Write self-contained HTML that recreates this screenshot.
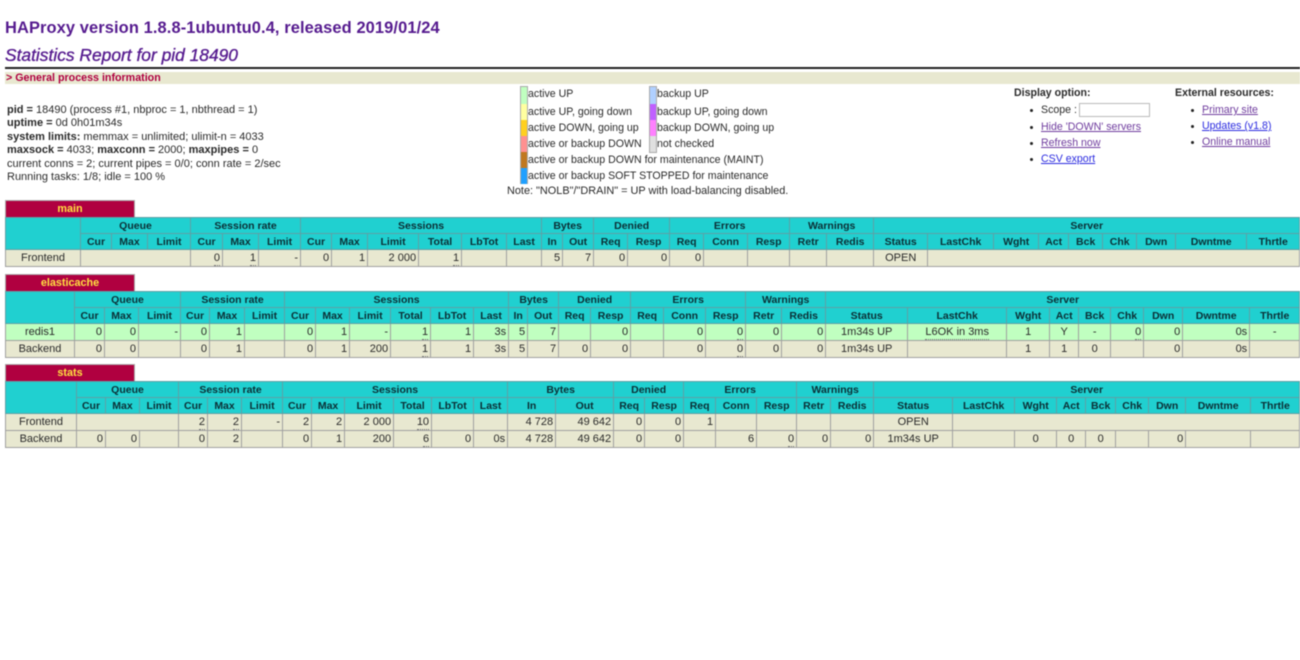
<!DOCTYPE html>
<html><head><meta charset="utf-8"><title>Statistics Report for HAProxy</title>
<style>
html,body{margin:0;padding:0;background:#fff;}
body{width:1300px;height:660px;position:relative;overflow:hidden;font-family:"Liberation Sans",sans-serif;font-size:10.6px;color:#2a2a2a;filter:blur(.4px);}
.a{position:absolute;white-space:nowrap;}
h1,h2,h3{margin:0;position:absolute;white-space:nowrap;}
h1{left:5px;top:18px;font-size:16.45px;line-height:20px;color:#561b8f;letter-spacing:.1px;}
h2{left:5px;top:45px;font-size:17.4px;line-height:20px;color:#561b8f;font-style:italic;font-weight:normal;-webkit-text-stroke:.35px #561b8f;}
.hr{position:absolute;left:5px;top:67px;width:1295px;height:1.5px;background:#222;}
h3{left:5px;top:72px;width:1295px;height:12px;line-height:12px;background:#e8e8d0;color:#b00040;font-size:10.7px;padding-left:1px;box-sizing:border-box;}
.info{left:7px;top:103.5px;line-height:13.5px;font-size:11px;}
.sw{position:absolute;width:6px;box-sizing:content-box;border-left:1px solid #aaa;border-right:1px solid #aaa;}
.n{font-size:10.9px;}
a{color:#6f3c9e;text-decoration:underline;}
a.b{color:#2a2ae0;}
.dot{position:absolute;width:3px;height:3px;border-radius:50%;background:#222;}
.px{position:absolute;left:5px;width:130px;height:17px;line-height:17px;background:#b00040;color:#ffe040;font-weight:bold;text-align:center;font-size:10.8px;box-sizing:border-box;border:1px solid #aaa;border-bottom:0;}
table{position:absolute;left:5px;width:1294px;table-layout:fixed;border-collapse:collapse;font-size:11px;}
td,th{border:1px solid #a0a0a0;padding:0 2px 0 0;overflow:hidden;white-space:nowrap;line-height:14px;text-align:right;background:#e8e8d0;}
th{background:#20d0d0;color:#0b2f35;text-align:center;font-weight:bold;padding:0;border-color:#5fa0a5;font-size:10.5px;}
tr.h0{height:16px;}
tr.h1{height:17px;}
td.c{text-align:center;padding:0;}
tr.g td{background:#c0ffc0;}
u{text-decoration:none;border-bottom:1px dotted #777;display:inline-block;line-height:13px;}
</style></head><body>
<h1>HAProxy version 1.8.8-1ubuntu0.4, released 2019/01/24</h1>
<h2>Statistics Report for pid 18490</h2>
<div class="hr"></div>
<h3>&gt; General process information</h3>

<div class="a info"><b>pid = </b>18490 (process #1, nbproc = 1, nbthread = 1)<br><b>uptime = </b>0d 0h01m34s<br><b>system limits:</b> memmax = unlimited; ulimit-n = 4033<br><b>maxsock = </b>4033; <b>maxconn = </b>2000; <b>maxpipes = </b>0<br>current conns = 2; current pipes = 0/0; conn rate = 2/sec<br>Running tasks: 1/8; idle = 100 %</div>

<div class="sw" style="left:520px;top:86px;height:17px;background:#c0ffc0;border-top:1px solid #aaa"></div>
<div class="sw" style="left:520px;top:104px;height:16px;background:#ffffa0"></div>
<div class="sw" style="left:520px;top:120px;height:16px;background:#ffd020"></div>
<div class="sw" style="left:520px;top:136px;height:16px;background:#ff9090"></div>
<div class="sw" style="left:520px;top:152px;height:16px;background:#c07820"></div>
<div class="sw" style="left:520px;top:168px;height:16px;background:#20a0ff"></div>
<div class="sw" style="left:649px;top:86px;height:17px;background:#b0d0ff;border-top:1px solid #aaa"></div>
<div class="sw" style="left:649px;top:104px;height:16px;background:#c060ff"></div>
<div class="sw" style="left:649px;top:120px;height:16px;background:#ff80ff"></div>
<div class="sw" style="left:649px;top:136px;height:16px;background:#e0e0e0;border-bottom:1px solid #aaa"></div>
<div class="a" style="left:528px;top:88px;">active UP</div>
<div class="a" style="left:528px;top:106px;">active UP, going down</div>
<div class="a" style="left:528px;top:122px;">active DOWN, going up</div>
<div class="a" style="left:528px;top:138px;">active or backup DOWN</div>
<div class="a" style="left:528px;top:154px;">active or backup DOWN for maintenance (MAINT)</div>
<div class="a" style="left:528px;top:170px;">active or backup SOFT STOPPED for maintenance</div>
<div class="a" style="left:657px;top:88px;">backup UP</div>
<div class="a" style="left:657px;top:106px;">backup UP, going down</div>
<div class="a" style="left:657px;top:122px;">backup DOWN, going up</div>
<div class="a" style="left:657px;top:138px;">not checked</div>
<div class="a n" style="left:507px;top:185px;">Note: "NOLB"/"DRAIN" = UP with load-balancing disabled.</div>

<div class="a" style="left:1014px;top:87px;"><b>Display option:</b></div>
<div class="dot" style="left:1030px;top:108.5px"></div><div class="a" style="left:1041px;top:104px;">Scope :</div>
<div class="a" style="left:1079px;top:103px;width:69px;height:12px;border:1px solid #bbb;"></div>
<div class="dot" style="left:1030px;top:125.5px"></div><div class="a" style="left:1041px;top:121px;"><a>Hide 'DOWN' servers</a></div>
<div class="dot" style="left:1030px;top:141.5px"></div><div class="a" style="left:1041px;top:137px;"><a>Refresh now</a></div>
<div class="dot" style="left:1030px;top:157.5px"></div><div class="a" style="left:1041px;top:153px;"><a class="b">CSV export</a></div>
<div class="a" style="left:1175px;top:87px;"><b>External resources:</b></div>
<div class="dot" style="left:1191px;top:108.5px"></div><div class="a" style="left:1202px;top:104px;"><a>Primary site</a></div>
<div class="dot" style="left:1191px;top:124.5px"></div><div class="a" style="left:1202px;top:120px;"><a class="b">Updates (v1.8)</a></div>
<div class="dot" style="left:1191px;top:140.5px"></div><div class="a" style="left:1202px;top:136px;"><a>Online manual</a></div>

<div class="px" style="top:200px">main</div>
<table style="top:217px">
<colgroup><col style="width:75px"><col style="width:31px"><col style="width:36px"><col style="width:43px"><col style="width:32px"><col style="width:36px"><col style="width:42px"><col style="width:31px"><col style="width:36px"><col style="width:51px"><col style="width:43px"><col style="width:45px"><col style="width:35px"><col style="width:21px"><col style="width:31px"><col style="width:34px"><col style="width:42px"><col style="width:34px"><col style="width:44px"><col style="width:42px"><col style="width:37px"><col style="width:47px"><col style="width:54px"><col style="width:66px"><col style="width:45px"><col style="width:30px"><col style="width:34px"><col style="width:34px"><col style="width:39px"><col style="width:71px"><col style="width:53px"></colgroup>
<tr class="h0"><th rowspan="2"></th><th colspan="3">Queue</th><th colspan="3">Session rate</th><th colspan="6">Sessions</th><th colspan="2">Bytes</th><th colspan="2">Denied</th><th colspan="3">Errors</th><th colspan="2">Warnings</th><th colspan="9">Server</th></tr>
<tr class="h0"><th>Cur</th><th>Max</th><th>Limit</th><th>Cur</th><th>Max</th><th>Limit</th><th>Cur</th><th>Max</th><th>Limit</th><th>Total</th><th>LbTot</th><th>Last</th><th>In</th><th>Out</th><th>Req</th><th>Resp</th><th>Req</th><th>Conn</th><th>Resp</th><th>Retr</th><th>Redis</th><th>Status</th><th>LastChk</th><th>Wght</th><th>Act</th><th>Bck</th><th>Chk</th><th>Dwn</th><th>Dwntme</th><th>Thrtle</th></tr>
<tr class="h1"><td class="c">Frontend</td><td colspan="3"></td><td><u>0</u></td><td><u>1</u></td><td>-</td><td>0</td><td>1</td><td>2 000</td><td><u>1</u></td><td></td><td></td><td>5</td><td>7</td><td>0</td><td>0</td><td>0</td><td></td><td></td><td></td><td></td><td class="c">OPEN</td><td colspan="8"></td></tr>
</table>

<div class="px" style="top:274px">elasticache</div>
<table style="top:291px">
<colgroup><col style="width:69px"><col style="width:30px"><col style="width:34px"><col style="width:42px"><col style="width:29px"><col style="width:35px"><col style="width:40px"><col style="width:31px"><col style="width:34px"><col style="width:41px"><col style="width:40px"><col style="width:43px"><col style="width:35px"><col style="width:19px"><col style="width:31px"><col style="width:32px"><col style="width:40px"><col style="width:33px"><col style="width:42px"><col style="width:40px"><col style="width:36px"><col style="width:44px"><col style="width:82px"><col style="width:99px"><col style="width:43px"><col style="width:29px"><col style="width:32px"><col style="width:33px"><col style="width:39px"><col style="width:67px"><col style="width:50px"></colgroup>
<tr class="h0"><th rowspan="2"></th><th colspan="3">Queue</th><th colspan="3">Session rate</th><th colspan="6">Sessions</th><th colspan="2">Bytes</th><th colspan="2">Denied</th><th colspan="3">Errors</th><th colspan="2">Warnings</th><th colspan="9">Server</th></tr>
<tr class="h0"><th>Cur</th><th>Max</th><th>Limit</th><th>Cur</th><th>Max</th><th>Limit</th><th>Cur</th><th>Max</th><th>Limit</th><th>Total</th><th>LbTot</th><th>Last</th><th>In</th><th>Out</th><th>Req</th><th>Resp</th><th>Req</th><th>Conn</th><th>Resp</th><th>Retr</th><th>Redis</th><th>Status</th><th>LastChk</th><th>Wght</th><th>Act</th><th>Bck</th><th>Chk</th><th>Dwn</th><th>Dwntme</th><th>Thrtle</th></tr>
<tr class="h1 g"><td class="c">redis1</td><td>0</td><td>0</td><td>-</td><td>0</td><td>1</td><td></td><td>0</td><td>1</td><td>-</td><td><u>1</u></td><td>1</td><td>3s</td><td>5</td><td>7</td><td></td><td>0</td><td></td><td>0</td><td><u>0</u></td><td>0</td><td>0</td><td class="c">1m34s UP</td><td class="c"><u>L6OK in 3ms</u></td><td class="c">1</td><td class="c">Y</td><td class="c">-</td><td><u>0</u></td><td>0</td><td>0s</td><td class="c">-</td></tr>
<tr class="h1"><td class="c">Backend</td><td>0</td><td>0</td><td></td><td>0</td><td>1</td><td></td><td>0</td><td>1</td><td>200</td><td><u>1</u></td><td>1</td><td>3s</td><td>5</td><td>7</td><td>0</td><td>0</td><td></td><td>0</td><td><u>0</u></td><td>0</td><td>0</td><td class="c">1m34s UP</td><td></td><td class="c">1</td><td class="c">1</td><td class="c">0</td><td></td><td>0</td><td>0s</td><td></td></tr>
</table>

<div class="px" style="top:364px">stats</div>
<table style="top:381px">
<colgroup><col style="width:71px"><col style="width:29px"><col style="width:34px"><col style="width:39px"><col style="width:29px"><col style="width:34px"><col style="width:41px"><col style="width:29px"><col style="width:33px"><col style="width:49px"><col style="width:38px"><col style="width:42px"><col style="width:34px"><col style="width:48px"><col style="width:58px"><col style="width:31px"><col style="width:39px"><col style="width:32px"><col style="width:41px"><col style="width:40px"><col style="width:34px"><col style="width:43px"><col style="width:79px"><col style="width:62px"><col style="width:42px"><col style="width:29px"><col style="width:30px"><col style="width:33px"><col style="width:37px"><col style="width:65px"><col style="width:49px"></colgroup>
<tr class="h0"><th rowspan="2"></th><th colspan="3">Queue</th><th colspan="3">Session rate</th><th colspan="6">Sessions</th><th colspan="2">Bytes</th><th colspan="2">Denied</th><th colspan="3">Errors</th><th colspan="2">Warnings</th><th colspan="9">Server</th></tr>
<tr class="h0"><th>Cur</th><th>Max</th><th>Limit</th><th>Cur</th><th>Max</th><th>Limit</th><th>Cur</th><th>Max</th><th>Limit</th><th>Total</th><th>LbTot</th><th>Last</th><th>In</th><th>Out</th><th>Req</th><th>Resp</th><th>Req</th><th>Conn</th><th>Resp</th><th>Retr</th><th>Redis</th><th>Status</th><th>LastChk</th><th>Wght</th><th>Act</th><th>Bck</th><th>Chk</th><th>Dwn</th><th>Dwntme</th><th>Thrtle</th></tr>
<tr class="h1"><td class="c">Frontend</td><td colspan="3"></td><td><u>2</u></td><td><u>2</u></td><td>-</td><td>2</td><td>2</td><td>2 000</td><td><u>10</u></td><td></td><td></td><td>4 728</td><td>49 642</td><td>0</td><td>0</td><td>1</td><td></td><td></td><td></td><td></td><td class="c">OPEN</td><td colspan="8"></td></tr>
<tr class="h1"><td class="c">Backend</td><td>0</td><td>0</td><td></td><td>0</td><td>2</td><td></td><td>0</td><td>1</td><td>200</td><td><u>6</u></td><td>0</td><td>0s</td><td>4 728</td><td>49 642</td><td>0</td><td>0</td><td></td><td>6</td><td><u>0</u></td><td>0</td><td>0</td><td class="c">1m34s UP</td><td></td><td class="c">0</td><td class="c">0</td><td class="c">0</td><td></td><td>0</td><td></td><td></td></tr>
</table>
</body></html>
